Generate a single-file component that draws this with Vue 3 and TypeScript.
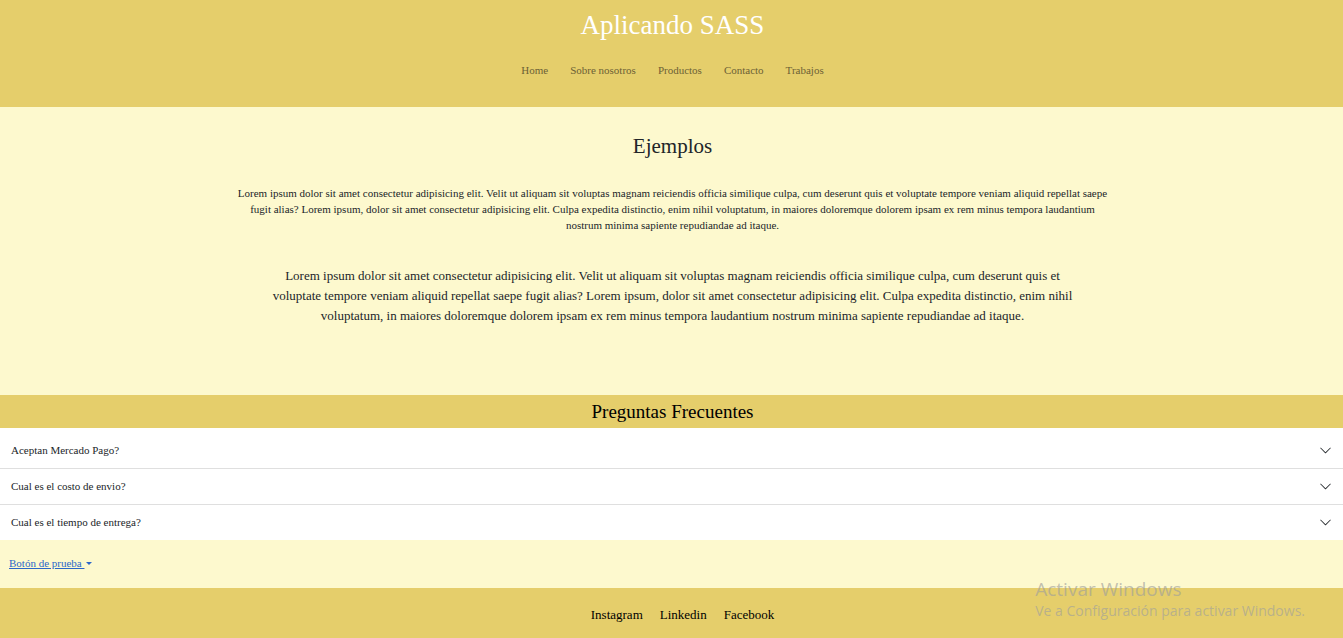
<script setup lang="ts">
import { ref } from 'vue'

const navLinks: string[] = ['Home', 'Sobre nosotros', 'Productos', 'Contacto', 'Trabajos']
const questions: string[] = [
  'Aceptan Mercado Pago?',
  'Cual es el costo de envio?',
  'Cual es el tiempo de entrega?',
]
const socialLinks: string[] = ['Instagram', 'Linkedin', 'Facebook']
const lorem =
  'Lorem ipsum dolor sit amet consectetur adipisicing elit. Velit ut aliquam sit voluptas magnam reiciendis officia similique culpa, cum deserunt quis et voluptate tempore veniam aliquid repellat saepe fugit alias? Lorem ipsum, dolor sit amet consectetur adipisicing elit. Culpa expedita distinctio, enim nihil voluptatum, in maiores doloremque dolorem ipsam ex rem minus tempora laudantium nostrum minima sapiente repudiandae ad itaque.'

const selected = ref<number | null>(null)
</script>

<template>
  <div class="page">
    <header class="header">
      <h1 class="title">Aplicando SASS</h1>
      <nav class="nav">
        <a v-for="link in navLinks" :key="link" href="#" class="nav-link">{{ link }}</a>
      </nav>
    </header>

    <main class="main">
      <section class="examples">
        <h2 class="examples-title">Ejemplos</h2>
        <p class="text-small">{{ lorem }}</p>
        <p class="text-large">{{ lorem }}</p>
      </section>

      <section class="faq">
        <h2 class="faq-title">Preguntas Frecuentes</h2>
        <div class="accordion">
          <button
            v-for="(question, index) in questions"
            :key="question"
            type="button"
            class="question"
            :aria-pressed="selected === index"
            @click="selected = selected === index ? null : index"
          >
            <span class="question-text">{{ question }}</span>
            <svg class="chevron" viewBox="0 0 16 16" aria-hidden="true">
              <path
                fill-rule="evenodd"
                d="M1.646 4.646a.5.5 0 0 1 .708 0L8 10.293l5.646-5.647a.5.5 0 0 1 .708.708l-6 6a.5.5 0 0 1-.708 0l-6-6a.5.5 0 0 1 0-.708z"
              />
            </svg>
          </button>
        </div>
      </section>

      <div class="dropdown">
        <button type="button" class="dropdown-toggle">
          <span class="dropdown-label">Botón de prueba&nbsp;</span>
          <span class="caret" aria-hidden="true"></span>
        </button>
      </div>
    </main>

    <footer class="footer">
      <a v-for="link in socialLinks" :key="link" href="#" class="social-link">{{ link }}</a>
    </footer>

    <aside class="activation">
      <p class="activation-title">Activar Windows</p>
      <p class="activation-text">Ve a Configuración para activar Windows.</p>
    </aside>
  </div>
</template>

<style>
body {
  margin: 0;
  background: #fdf9ce;
}
</style>

<style scoped>
.page {
  display: flex;
  flex-direction: column;
  min-height: 100vh;
  position: relative;
  background: #fdf9ce;
  color: #212529;
  font-family: 'Liberation Serif', 'Times New Roman', serif;
  font-size: 11px;
  line-height: 16px;
}

h1,
h2,
p {
  margin: 0;
  font-weight: 400;
}

.header {
  display: flex;
  flex-direction: column;
  align-items: center;
  gap: 20px;
  padding: 9px 0 29px 2px;
  background: #e5ce6b;
}

.title {
  color: #fff;
  font-size: 27px;
  line-height: 33px;
}

.nav {
  display: flex;
  gap: 22px;
}

.nav-link {
  color: #6c6136;
  text-decoration: none;
}

.main {
  flex: 1;
}

.examples {
  display: flex;
  flex-direction: column;
  align-items: center;
  padding: 26px 16px 69px 18px;
  text-align: center;
}

.examples-title {
  margin-bottom: 26px;
  font-size: 21px;
  line-height: 26px;
}

.text-small {
  max-width: 875px;
  margin-bottom: 33px;
}

.text-large {
  max-width: 815px;
  font-size: 13px;
  line-height: 20px;
}

.faq-title {
  padding: 4px 0 4px 2px;
  background: #e5ce6b;
  color: #000;
  font-size: 19px;
  line-height: 25px;
  text-align: center;
}

.accordion {
  padding-top: 5px;
  background: #fff;
}

.question {
  display: flex;
  align-items: center;
  justify-content: space-between;
  box-sizing: border-box;
  width: 100%;
  height: 36px;
  padding: 0 11px;
  border: 0;
  border-bottom: 1px solid #dfdfdf;
  background: #fff;
  color: #212529;
  font: inherit;
  text-align: left;
  cursor: pointer;
}

.question:last-child {
  height: 35px;
  border-bottom: 0;
}

.question-text {
  padding-bottom: 2px;
}

.chevron {
  width: 13px;
  height: 13px;
  fill: #212529;
}

.dropdown {
  display: flex;
  padding: 15px 9px 17px;
}

.dropdown-toggle {
  display: flex;
  align-items: center;
  gap: 2px;
  padding: 0;
  border: 0;
  background: none;
  color: #2c67c9;
  font: inherit;
  cursor: pointer;
}

.dropdown-label {
  text-decoration: underline;
}

.caret {
  border-top: 3px solid #2c67c9;
  border-right: 3px solid transparent;
  border-left: 3px solid transparent;
}

.footer {
  display: flex;
  justify-content: center;
  gap: 17px;
  padding: 17px 0 13px 22px;
  background: #e5ce6b;
  font-size: 13px;
  line-height: 20px;
}

.social-link {
  color: #000;
  text-decoration: none;
}

.activation {
  position: absolute;
  right: 38px;
  bottom: 17px;
  color: rgba(160, 160, 155, 0.65);
  font-family: 'Open Sans', 'Noto Sans', sans-serif;
  pointer-events: none;
}

.activation-title {
  font-size: 19px;
  line-height: 24px;
}

.activation-text {
  font-size: 14px;
  line-height: 20px;
}
</style>
